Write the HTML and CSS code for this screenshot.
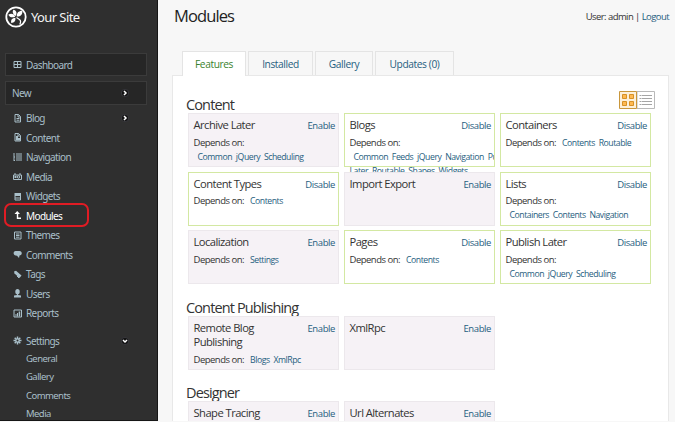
FILE: index.html
```html
<!DOCTYPE html>
<html lang="en">
<head>
<meta charset="utf-8">
<title>Modules - Your Site</title>
<link rel="stylesheet" href="styles.css">
</head>
<body>
<div class="page">
<aside class="sidebar">
  <div class="brand">
    <svg class="logo" viewBox="0 0 22 22"><circle cx="11" cy="11" r="9.7" fill="none" stroke="#fff" stroke-width="1.800"/><g fill="#fff"><path d="M10.300 10.800C7 12 4.500 11.300 3.300 8.800 6 7 9 7.800 10.300 10.800zM10.800 10C7.800 8.500 7 6 8.300 3.800 11.500 4.500 12.300 7 10.800 10zM11.800 10.600C11.500 7 13.500 4.800 17.300 4.800 17.800 8.500 15.500 10.800 11.800 10.600zM10.400 11.700C10.800 15 9.500 16.800 6.300 17 5.500 14 7.200 11.800 10.400 11.700z"/><path d="M11.500 11.500L14.500 13.500Q16.500 15 14.800 18.500" fill="none" stroke="#fff" stroke-width="1.200"/></g></svg>
    <span>Your Site</span>
  </div>
  <div class="box dash"><svg class="icon" viewBox="0 0 9 9"><path d="M1 1.500h7v6H1zM4.500 1.500v6M1 4.500h7" fill="none" stroke="currentColor"/></svg><span>Dashboard</span></div>
  <div class="box new"><span>New</span><svg class="arrow" viewBox="0 0 8 8"><circle cx="4" cy="4" r="3.700" fill="#141414" stroke="#50505a" stroke-width=".5"/><path d="M3 2l2 2-2 2" fill="none" stroke="#fff" stroke-width="1.500"/></svg></div>
  <nav class="menu">
    <a><svg class="icon" viewBox="0 0 9 9"><path d="M2 .5h3.500L7.500 2.500V8H2zM5 .5v2.500h2.500M3.500 4.500h3M3.500 6.200h3" fill="none" stroke="currentColor"/></svg><span>Blog</span><svg class="arrow" viewBox="0 0 8 8"><circle cx="4" cy="4" r="3.700" fill="#141414" stroke="#50505a" stroke-width=".5"/><path d="M3 2l2 2-2 2" fill="none" stroke="#fff" stroke-width="1.500"/></svg></a>
    <a><svg class="icon" viewBox="0 0 9 9"><path d="M2 .5h3.500L7.500 2.500V8H2zM5 .5v2.500h2.500" fill="none" stroke="currentColor"/><path d="M3 3h2v2h2v2.500H3z" fill="currentColor"/></svg><span>Content</span></a>
    <a><svg class="icon" viewBox="0 0 9 9"><path d="M.5.5h1M1 1v7M1 4h1M1 7.500h1M3 1h6M3 3h6M3 5h6M3 7h6" fill="none" stroke="currentColor"/></svg><span>Navigation</span></a>
    <a><svg class="icon" viewBox="0 0 9 9"><path d="M.5 3h8v4.500h-8zM1 2h2M6 2h2" fill="none" stroke="currentColor"/><path d="M1.500 4h2v2h-2z" fill="currentColor"/><circle cx="5.500" cy="5" r="1.200" fill="none" stroke="currentColor"/></svg><span>Media</span></a>
    <a><svg class="icon" viewBox="0 0 9 9"><path d="M1.500 1h6.500v3H1.500z" fill="currentColor"/><path d="M2 4v4h5.500V4M2 6h5.500" fill="none" stroke="currentColor"/></svg><span>Widgets</span></a>
    <a class="current"><svg class="icon" viewBox="0 0 9 9"><path d="M4.200 0L7 3H5.200v3.500H8V8H3.800V3H1.500z" fill="currentColor"/></svg><span>Modules</span></a>
    <a><svg class="icon" viewBox="0 0 9 9"><path d="M1.500 1h6.500v7H1.500zM3 3h3.500M3 4.500h3.500M3 6.200h3.500" fill="none" stroke="currentColor"/></svg><span>Themes</span></a>
    <a><svg class="icon" viewBox="0 0 9 9"><path d="M2.500 1h4C9.500 1.500 9.500 5 6.500 5.500L6 8 4 5.700C-.500 5.500 0 1.500 2.500 1z" fill="currentColor"/></svg><span>Comments</span></a>
    <a><svg class="icon" viewBox="0 0 9 9"><path d="M1 1.500L3 .8 8.500 5.500 6.500 8 1.500 3.500z" fill="currentColor"/><path d="M4 6l2 2" stroke="currentColor"/></svg><span>Tags</span></a>
    <a><svg class="icon" viewBox="0 0 9 9"><ellipse cx="4.500" cy="2.700" rx="2.200" ry="2.700" fill="currentColor"/><path d="M4 4h1v2l3 .5V8.500H1V6.500L4 6z" fill="currentColor"/></svg><span>Users</span></a>
    <a><svg class="icon" viewBox="0 0 9 9"><path d="M1 1h7.500v7H1z" fill="none" stroke="currentColor"/><path d="M2.500 5h1v2.500h-1zM4 4h1v3.500H4zM5.700 2.500h1.500v5H5.700z" fill="currentColor"/></svg><span>Reports</span></a>
  </nav>
  <div class="settings"><svg class="icon" viewBox="0 0 9 9"><path d="M4.500.5v8M.5 4.500h8M1.700 1.700l5.600 5.600M7.300 1.700L1.700 7.300" stroke="currentColor" stroke-width="1.500"/><circle cx="4.500" cy="4.500" r="1" fill="#2f2f2f"/></svg><span>Settings</span><svg class="arrow" viewBox="0 0 8 8"><circle cx="4" cy="4" r="3.700" fill="#141414" stroke="#50505a" stroke-width=".5"/><path d="M2 3l2 2 2-2" fill="none" stroke="#fff" stroke-width="1.500"/></svg></div>
  <nav class="submenu"><a>General</a><a>Gallery</a><a>Comments</a><a>Media</a></nav>
  <div class="highlight"></div>
</aside>
<main class="main">
  <header class="top"><h1>Modules</h1><div class="user">User: admin | <a>Logout</a></div></header>
  <div class="tabs"><a class="tab active">Features</a><a class="tab t2">Installed</a><a class="tab t3">Gallery</a><a class="tab t4">Updates (0)</a></div>
  <div class="panel">
    <svg class="switch" viewBox="0 0 36 18"><path d="M18 .5h17.500v17H18z" fill="#fff" stroke="#b9b9b9"/><path d="M.5.5h17v17H.5z" fill="#fdf0d9" stroke="#c9973c"/><path d="M3.500 3.500h4v4h-4zM10.500 3.500h4v4h-4zM3.500 10.500h4v4h-4zM10.500 10.500h4v4h-4z" fill="#ffb951" stroke="#d79226"/><path d="M23 4.500h10M23 7.500h10M23 10.500h10M23 13.500h10M20.500 4.500h2M20.500 7.500h2M20.500 10.500h2M20.500 13.500h2" stroke="#a5a5a5"/></svg>
    <section><h2 class="h-a">Content</h2>
      <div class="grid">
        <article class="card off"><div class="head"><h3>Archive Later</h3><a>Enable</a></div><p>Depends on:</p><div class="deps">Common jQuery Scheduling</div></article>
        <article class="card"><div class="head"><h3>Blogs</h3><a>Disable</a></div><p>Depends on:</p><div class="deps long">Common Feeds jQuery Navigation Publish</div><div class="deps rest">Later Routable Shapes Widgets</div></article>
        <article class="card"><div class="head"><h3>Containers</h3><a>Disable</a></div><p>Depends on: <span>Contents Routable</span></p></article>
        <article class="card"><div class="head"><h3>Content Types</h3><a>Disable</a></div><p>Depends on: <span>Contents</span></p></article>
        <article class="card off"><div class="head"><h3>Import Export</h3><a>Enable</a></div></article>
        <article class="card"><div class="head"><h3>Lists</h3><a>Disable</a></div><p>Depends on:</p><div class="deps">Containers Contents Navigation</div></article>
        <article class="card off"><div class="head"><h3>Localization</h3><a>Enable</a></div><p>Depends on: <span>Settings</span></p></article>
        <article class="card"><div class="head"><h3>Pages</h3><a>Disable</a></div><p>Depends on: <span>Contents</span></p></article>
        <article class="card"><div class="head"><h3>Publish Later</h3><a>Disable</a></div><p>Depends on:</p><div class="deps">Common jQuery Scheduling</div></article>
      </div></section>
    <section><h2 class="h-b">Content Publishing</h2>
      <div class="grid">
        <article class="card off"><div class="head"><h3>Remote Blog<br>Publishing</h3><a>Enable</a></div><p>Depends on: <span>Blogs XmlRpc</span></p></article>
        <article class="card off"><div class="head"><h3>XmlRpc</h3><a>Enable</a></div></article>
      </div></section>
    <section><h2 class="h-c">Designer</h2>
      <div class="grid">
        <article class="card off"><div class="head"><h3>Shape Tracing</h3><a>Enable</a></div></article>
        <article class="card off"><div class="head"><h3>Url Alternates</h3><a>Enable</a></div></article>
      </div></section>
  </div>
</main>
</div>
</body>
</html>
```
FILE: styles.css
```css
* { box-sizing: border-box; }
body { margin: 0; height: 422px; overflow: hidden; background: #f7f7f7; font-family: "Open Sans", "Noto Sans", sans-serif; font-size: 10px; color: #333; }
h1, h2, h3, p { margin: 0; font-weight: 400; }
.page { display: flex; height: 421px; overflow: hidden; }
.sidebar { position: relative; width: 158px; flex: none; background: #2f2f2f; border-right: 1px solid #161616; border-bottom: 1px solid #161616; color: #a9bfc9; overflow: hidden; letter-spacing: -.3px; font-family: "Noto Sans", "Open Sans", sans-serif; font-size: 10px; }
.brand { display: flex; align-items: center; gap: 4px; height: 33px; padding-left: 5px; color: #f3f3f3; font-size: 13px; letter-spacing: -.6px; }
.logo { width: 22px; height: 22px; }
.box { display: flex; align-items: center; width: 142px; margin-left: 5px; background: #262626; border: 1px solid #3b3b3b; }
.dash { height: 23px; margin-top: 20px; padding-left: 7px; }
.new { height: 24px; margin-top: 5px; padding: 0 17px 0 6px; }
.icon { width: 9px; height: 9px; margin-right: 4px; flex: none; }
.arrow { width: 8px; height: 8px; margin-left: auto; }
.menu { padding-top: 3.500px; }
.menu a { display: flex; align-items: center; height: 19.500px; padding: 0 28px 0 13px; }
.menu .current { color: #fff; }
.menu span, .box span, .settings span { letter-spacing: -.6px; }
.settings { display: flex; align-items: center; height: 19px; margin-top: 8px; padding: 0 28px 0 13px; }
.submenu { margin-top: -.5px; }
.submenu a { display: block; height: 18.600px; line-height: 18.600px; padding-left: 26px; font-size: 9.500px; letter-spacing: -.55px; }
.highlight { position: absolute; left: 4px; top: 203px; width: 85px; height: 24px; border: 2px solid #e01c24; border-radius: 7px; }
.main { width: 517px; padding: 0 6px 0 14px; }
.top { display: flex; justify-content: space-between; height: 51px; padding-left: 2px; }
h1 { font-size: 16.500px; line-height: 31px; letter-spacing: -.9px; color: #222; }
.user { font-size: 9.500px; line-height: 34px; letter-spacing: -.57px; white-space: nowrap; }
a { color: inherit; }
.user a, .head a { color: #1f5e80; }
.tabs { display: flex; gap: 2px; padding-left: 10px; height: 25px; margin-bottom: -1px; position: relative; }
.tab { height: 24px; width: 65px; border: 1px solid #e4e4e4; border-bottom: 0; line-height: 25px; text-align: center; color: #1f5e80; font-size: 10.200px; letter-spacing: -.4px; }
.active { width: 64px; height: 25px; background: #fff; color: #3a822e; }
.t3 { width: 58px; }
.t4 { width: 79px; }
.panel { height: 360px; background: #fff; border: 1px solid #e8e8e8; padding: 20px 0 0 13px; }
.switch { float: right; width: 36px; height: 18px; margin: -5px 13px -20px 0; }
h2 { font-size: 14.500px; line-height: 17px; height: 17px; letter-spacing: -.87px; color: #333; }
.h-b { margin-top: 15px; }
.h-c { margin-top: 14px; }
.grid { display: grid; grid-template-columns: repeat(3, 151px); grid-auto-rows: 54px; column-gap: 5px; row-gap: 4.600px; padding-left: 2px; }
.card { position: relative; border: 1px solid #d3e8a2; background: #fff; padding: 3px 3px 0 4.500px; overflow-x: clip; overflow-y: visible; white-space: nowrap; }
.off { background: #f6f2f6; border-color: #ece8ec; }
.head { display: flex; justify-content: space-between; line-height: 17px; }
h3 { font-size: 11.200px; line-height: 14px; padding: 1px 0 2px; letter-spacing: -.54px; }
.head a { font-size: 9.500px; letter-spacing: -.4px; }
p { font-size: 9.500px; line-height: 14px; margin-top: 1.500px; letter-spacing: -.5px; }
p span, .deps { font-size: 8.700px; color: #1f5e80; word-spacing: 2px; letter-spacing: -.46px; }
p span { margin-left: 4px; }
.deps { line-height: 14.500px; padding-left: 4px; }
.rest { padding-left: 0; }
```
